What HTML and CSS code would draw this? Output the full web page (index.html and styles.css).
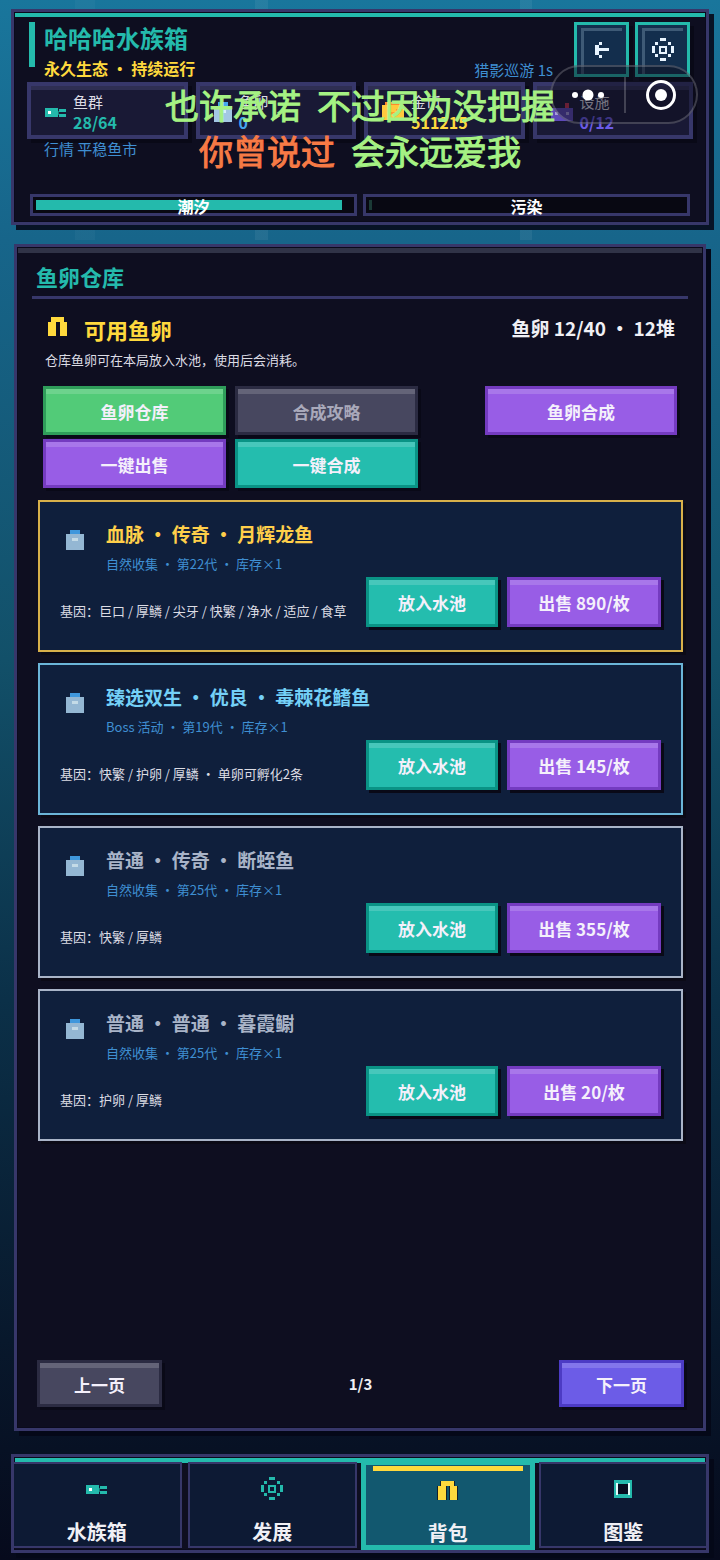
FILE: index.html
```
<!DOCTYPE html>
<html lang="zh-CN">
<head>
  <meta charset="UTF-8" />
  <meta name="viewport" content="width=device-width, initial-scale=1.0" />
  <title>哈哈哈水族箱</title>
  <link rel="stylesheet" href="styles.css">
</head>
<body>
  <!-- shared pixel icons -->
  <svg class="sprites" aria-hidden="true">
    <symbol id="i-fish" viewBox="0 0 21 9">
      <path fill="#24baac" d="M0 0h13v9H0zM14 1h7v3h-7zM14 6h7v3h-7z"/>
      <path fill="#127c76" d="M13 3h1v4h-1z"/>
      <path fill="#fff" d="M3 3h3v3H3z"/>
    </symbol>
    <symbol id="i-gear" viewBox="0 0 24 24">
      <path fill="currentColor" d="M9 0h6v3H9zM9 20h6v3H9zM1 8h3v7H1zM20 8h3v7h-3zM4 4h3v3H4zM17 4h3v3h-3zM4 16h3v3H4zM17 16h3v3h-3z"/>
      <path fill="currentColor" fill-rule="evenodd" d="M8 8h8v8H8zM10 10v4h4v-4z"/>
    </symbol>
    <symbol id="i-bag" viewBox="0 0 19 19">
      <path fill="#ffd93d" d="M3 0h13v5h3v14h-7V5H8v14H0V5h3z"/>
    </symbol>
    <symbol id="i-egg" viewBox="0 0 18 20">
      <path fill="#45a5ee" d="M4 0h10v5H4z"/>
      <path fill="#a3c8e4" d="M0 4h18v16H0z"/>
      <path fill="#45a5ee" d="M4 0h10v4H4z"/>
      <path fill="#d8f0fa" d="M6 8h6v3H6z"/>
    </symbol>
  </svg>

  <header class="top-panel">
    <div class="top-row">
      <div class="title-block">
        <h1>哈哈哈水族箱</h1>
        <p>永久生态 ・ 持续运行</p>
      </div>
      <span class="event">猎影巡游 1s</span>
      <div class="top-actions">
        <button class="icon-btn" type="button" aria-label="返回">
          <svg width="14" height="17" viewBox="0 0 14 17"><path fill="#e8f4ff" d="M0 4h4v3h10v3H4v4H0zM4 1h3v3H4zM4 14h3v3H4z"/></svg>
        </button>
        <button class="icon-btn" type="button" aria-label="设置">
          <svg width="24" height="24"><use href="#i-gear"/></svg>
        </button>
      </div>
    </div>

    <div class="stats">
      <div class="stat">
        <svg width="21" height="9"><use href="#i-fish"/></svg>
        <div><span>鱼群</span><b class="c-teal">28/64</b></div>
      </div>
      <div class="stat">
        <svg width="18" height="20"><use href="#i-egg"/></svg>
        <div><span>鱼卵</span><b class="c-blue">0</b></div>
      </div>
      <div class="stat">
        <svg width="22" height="20" viewBox="0 0 22 20">
          <path fill="#ff8a2b" d="M3 0h16v3H3z"/>
          <path fill="#ffc93d" d="M0 3h22v15H0z"/>
          <path fill="#ff9f2e" d="M5 7h3v3H5zM8 10h6v3H8zM14 7h3v3h-3z"/>
        </svg>
        <div><span>金币</span><b class="c-yellow">511215</b></div>
      </div>
      <div class="stat">
        <svg width="22" height="18" viewBox="0 0 22 18">
          <path fill="#c2314d" d="M14 0h4v5h-4z"/>
          <path fill="#5d49b8" d="M0 5h22v13H0z"/>
          <path fill="#a79be0" d="M4 9h3v3H4zM15 9h3v3h-3z"/>
        </svg>
        <div><span>设施</span><b class="c-violet">0/12</b></div>
      </div>
    </div>

    <p class="market">行情 平稳鱼市</p>

    <div class="meters">
      <div class="meter"><i style="width: 97%"></i><span>潮汐</span></div>
      <div class="meter meter-low"><i style="width: 1%"></i><span>污染</span></div>
    </div>

    <div class="capsule">
      <button type="button" aria-label="更多">
        <svg width="32" height="12" viewBox="0 0 32 12"><g fill="#fff"><circle cx="3" cy="6" r="3"/><circle cx="16" cy="6" r="5.5"/><circle cx="29" cy="6" r="3"/></g></svg>
      </button>
      <button type="button" aria-label="关闭">
        <svg width="32" height="32" viewBox="0 0 32 32"><circle cx="16" cy="16" r="13.5" fill="none" stroke="#fff" stroke-width="3"/><circle cx="16" cy="16" r="6" fill="#fff"/></svg>
      </button>
    </div>

    <div class="lyrics">
      <p><span>也许承诺</span> <span>不过因为没把握</span></p>
      <p><span class="sung">你曾说过</span> <span>会永远爱我</span></p>
    </div>
  </header>

  <main class="store">
    <h2>鱼卵仓库</h2>
    <div class="store-head">
      <svg width="19" height="19"><use href="#i-bag"/></svg>
      <h3>可用鱼卵</h3>
      <span>鱼卵 12/40 ・ 12堆</span>
    </div>
    <p class="hint">仓库鱼卵可在本局放入水池，使用后会消耗。</p>

    <div class="tools">
      <button class="btn green" type="button">鱼卵仓库</button>
      <button class="btn gray dim" type="button">合成攻略</button>
      <button class="btn purple merge" type="button">鱼卵合成</button>
      <button class="btn purple" type="button">一键出售</button>
      <button class="btn teal" type="button">一键合成</button>
    </div>

    <section class="eggs">
      <article class="egg gold">
        <svg width="18" height="20"><use href="#i-egg"/></svg>
        <div class="egg-info">
          <h4>血脉 ・ 传奇 ・ 月辉龙鱼</h4>
          <p>自然收集 ・ 第22代 ・ 库存×1</p>
        </div>
        <div class="egg-foot">
          <p>基因：巨口 / 厚鳞 / 尖牙 / 快繁 / 净水 / 适应 / 食草</p>
          <button class="btn teal put" type="button">放入水池</button>
          <button class="btn purple sell" type="button">出售 890/枚</button>
        </div>
      </article>
      <article class="egg sky">
        <svg width="18" height="20"><use href="#i-egg"/></svg>
        <div class="egg-info">
          <h4>臻选双生 ・ 优良 ・ 毒棘花鳍鱼</h4>
          <p>Boss 活动 ・ 第19代 ・ 库存×1</p>
        </div>
        <div class="egg-foot">
          <p>基因：快繁 / 护卵 / 厚鳞 ・ 单卵可孵化2条</p>
          <button class="btn teal put" type="button">放入水池</button>
          <button class="btn purple sell" type="button">出售 145/枚</button>
        </div>
      </article>
      <article class="egg">
        <svg width="18" height="20"><use href="#i-egg"/></svg>
        <div class="egg-info">
          <h4>普通 ・ 传奇 ・ 断蛭鱼</h4>
          <p>自然收集 ・ 第25代 ・ 库存×1</p>
        </div>
        <div class="egg-foot">
          <p>基因：快繁 / 厚鳞</p>
          <button class="btn teal put" type="button">放入水池</button>
          <button class="btn purple sell" type="button">出售 355/枚</button>
        </div>
      </article>
      <article class="egg">
        <svg width="18" height="20"><use href="#i-egg"/></svg>
        <div class="egg-info">
          <h4>普通 ・ 普通 ・ 暮霞鳚</h4>
          <p>自然收集 ・ 第25代 ・ 库存×1</p>
        </div>
        <div class="egg-foot">
          <p>基因：护卵 / 厚鳞</p>
          <button class="btn teal put" type="button">放入水池</button>
          <button class="btn purple sell" type="button">出售 20/枚</button>
        </div>
      </article>
    </section>

    <div class="pager">
      <button class="btn gray" type="button">上一页</button>
      <span>1/3</span>
      <button class="btn indigo" type="button">下一页</button>
    </div>
  </main>

  <nav class="tabs">
    <button type="button"><svg width="21" height="9"><use href="#i-fish"/></svg><span>水族箱</span></button>
    <button type="button"><svg class="c-teal" width="24" height="24"><use href="#i-gear"/></svg><span>发展</span></button>
    <button type="button" class="active"><svg class="outlined" width="19" height="19"><use href="#i-bag"/></svg><span>背包</span></button>
    <button type="button">
      <svg width="18" height="18" viewBox="0 0 18 18"><path fill="#24baac" d="M0 0h18v18H0z"/><path fill="#e6fffb" d="M2 3h14v12H2z"/><path fill="#24baac" d="M4 2h10v14H4z"/><path fill="#070d20" d="M4 4h10v10H4z"/></svg>
      <span>图鉴</span>
    </button>
  </nav>
</body>
</html>
```
FILE: styles.css
```
* { box-sizing: border-box; }
html { min-height: 100%; }
body {
  margin: 0;
  padding: 9px 11px 7px;
  min-height: 100vh;
  display: flex;
  flex-direction: column;
  font-family: "Noto Sans CJK SC", sans-serif;
  color: #f0f0f5;
  background:
    linear-gradient(90deg, transparent 75px, rgba(255,255,255,0.03) 75px 95px, transparent 95px 255px, rgba(255,255,255,0.06) 255px 268px, transparent 268px 520px, rgba(255,255,255,0.06) 520px 532px, transparent 532px) 0 0 / 100% 240px no-repeat,
    linear-gradient(#19769c, #17658a 240px, #125069 660px, #0b3048 1000px, #08182c 1340px, #060a1c);
}
h1, h2, h3, h4, p { margin: 0; }
button { font-family: inherit; color: inherit; padding: 0; border: 0; background: none; cursor: pointer; }
svg { display: block; flex: none; }
.sprites { position: absolute; width: 0; height: 0; }

.c-teal { color: #24baac; }
.c-blue { color: #45a5ee; }
.c-yellow { color: #ffd93d; }
.c-violet { color: #6c5ce7; }

/* top panel */
.top-panel {
  position: relative;
  height: 216px;
  padding: 10px 16px 0 15px;
  background: #0e0e20;
  border: 3px solid #37376a;
  box-shadow: 5px 5px 0 #071326, inset 0 0 0 1px #0a0a1c, inset 0 5px 0 #24baac;
}
.top-row { display: flex; align-items: flex-start; height: 60px; }
.title-block { flex: 1; padding-left: 9px; border-left: 6px solid #24baac; height: 45px; }
.title-block h1 { font-size: 24px; line-height: 32px; color: #24baac; }
.title-block p { font-size: 16px; line-height: 28px; font-weight: bold; color: #ffd93d; }
.event { margin: 36px 21px 0 0; font-size: 15px; line-height: 24px; color: #3f8fd2; }
.top-actions { display: flex; gap: 6px; }
.icon-btn {
  width: 55px;
  height: 55px;
  display: grid;
  place-items: center;
  color: #e8f4ff;
  background: #132e4d;
  border: 3px solid #24baac;
  box-shadow: inset 4px 3px 0 #132e4d, inset -4px 0 0 #132e4d, inset 7px 6px 0 #3e5a76, 4px 4px 0 #090917;
}
.stats { display: grid; grid-template-columns: repeat(4, 1fr); gap: 8px; margin: 0 -3px 0 -2px; }
.stat {
  display: flex;
  align-items: center;
  gap: 7px;
  height: 57px;
  padding: 3px 0 0 14px;
  background: #191935;
  border: 4px solid #37376a;
  box-shadow: inset 0 4px 0 #2e2e52, 4px 4px 0 #090917;
}
.stat span { display: block; font-size: 15px; line-height: 20px; color: #dcdce4; }
.stat b { display: block; font-size: 16px; line-height: 20px; }
.market { padding-left: 15px; margin-top: -2px; font-size: 15px; line-height: 24px; color: #3f8fd2; }
.meters { display: grid; grid-template-columns: 1fr 1fr; gap: 6px; margin: 33px 0 0 1px; }
.meter { position: relative; height: 22px; padding: 3px; background: #080812; border: 3px solid #37376a; }
.meter i { display: block; height: 10px; background: #24baac; }
.meter-low i { background: #1b3a36; }
.meter span { position: absolute; inset: 0; text-align: center; font-size: 16px; line-height: 18px; font-weight: bold; color: #fff; }

/* host app controls and floating lyrics */
.capsule {
  position: absolute;
  top: 53px;
  right: 8px;
  width: 148px;
  height: 59px;
  display: grid;
  grid-template-columns: 1fr 1fr;
  background: rgba(14,14,30,0.5);
  border: 2px solid rgba(255,255,255,0.2);
  border-radius: 30px;
}
.capsule button { display: grid; place-items: center; }
.capsule button + button { border-left: 2px solid rgba(255,255,255,0.2); height: 36px; align-self: center; }
.lyrics {
  position: absolute;
  top: 70px;
  left: 0;
  right: 0;
  font-size: 34px;
  line-height: 46px;
  color: #a5f283;
  -webkit-text-stroke: 1px currentColor;
  pointer-events: none;
}
.lyrics p { display: flex; justify-content: center; gap: 16px; }
.lyrics .sung { color: #f77a45; }

/* pixel buttons */
.btn {
  height: 50px;
  padding-top: 1px;
  font-size: 17px;
  font-weight: bold;
  color: #f4f0fb;
  border: 3px solid;
  box-shadow: inset 0 5px 0 rgba(255,255,255,0.16), 3px 3px 0 #090917;
}
.green { background: #52cb78; border-color: #2f9d5a; }
.gray { background: #47475f; border-color: #2b2b42; }
.dim { color: #a9a9ba; }
.purple { background: #985de6; border-color: #743bc0; }
.teal { background: #24bdae; border-color: #0a9385; }
.indigo { background: #6c5ce7; border-color: #4c3bc4; }

/* egg store */
.store {
  flex: 1;
  display: flex;
  flex-direction: column;
  margin: 19px 3px 23px;
  padding: 13px 15px 21px;
  background: #0e0e20;
  border: 3px solid #37376a;
  box-shadow: 5px 5px 0 #040818, inset 0 0 0 1px #0a0a1c, inset 0 6px 0 #303347;
}
.store h2 { padding: 0 4px 4px; font-size: 22px; line-height: 32px; color: #24baac; border-bottom: 3px solid #37376a; }
.store-head { display: flex; padding: 13px 13px 0 16px; }
.store-head svg { margin-top: 5px; }
.store-head h3 { flex: 1; padding-left: 17px; font-size: 22px; line-height: 34px; color: #ffd93d; }
.store-head span { font-size: 19px; line-height: 32px; font-weight: bold; }
.hint { padding-left: 13px; font-size: 13px; line-height: 28px; color: #dcdce4; }
.tools { display: grid; grid-template-columns: 183px 183px 1fr; gap: 4px 9px; padding: 12px 11px 0; }
.tools .btn { height: 49px; }
.merge { width: 192px; justify-self: end; }
.eggs { display: grid; gap: 11px; margin: 12px 5px 0 6px; }
.egg {
  display: grid;
  grid-template-columns: 18px 1fr;
  grid-template-rows: 58px 1fr;
  column-gap: 22px;
  height: 152px;
  padding: 17px 20px 0 26px;
  background: #0f1f3c;
  border: 2px solid #a9b4c8;
  box-shadow: 3px 3px 0 #0b0a16;
}
.egg > svg { margin-top: 11px; opacity: 0.9; }
.egg h4 { font-size: 19px; line-height: 30px; color: #a9b4c8; }
.egg-info p { font-size: 13px; line-height: 30px; color: #3f8fd2; }
.gold { border-color: #d8b04a; }
.gold h4 { color: #ffcf4a; }
.sky { border-color: #6bb5d8; }
.sky h4 { color: #74d0f7; }
.egg-foot { grid-column: 1 / -1; display: flex; margin-left: -6px; }
.egg-foot p { flex: 1; font-size: 13px; line-height: 68px; color: #dcdce4; white-space: nowrap; }
.put { width: 132px; margin-right: 9px; }
.sell { width: 154px; }
.pager { display: flex; align-items: center; justify-content: space-between; margin: auto 4px 0 5px; font-size: 15px; font-weight: bold; }
.pager .btn { width: 125px; height: 47px; }

/* bottom tabs */
.tabs {
  display: grid;
  grid-template-columns: repeat(4, 1fr);
  grid-template-rows: 86px;
  gap: 6px;
  height: 99px;
  padding: 7px 0 0;
  background: #0e0e20;
  border: 1px solid #37376a;
  box-shadow: 5px 5px 0 #040818, inset 0 0 0 2px #37376a, inset 0 0 0 3px #0a0a1c, inset 0 8px 0 #24baac;
}
.tabs button {
  position: relative;
  display: grid;
  grid-template-rows: 54px 27px;
  justify-items: center;
  align-items: center;
  background: #0d1a34;
  border: 2px solid #37376a;
  font-size: 20px;
  line-height: 27px;
  font-weight: bold;
}
.tabs button svg { margin-bottom: 4px; }
.tabs .active { margin: -2px; background: #12586f; border: 5px solid #24baac; }
.tabs .active::before { content: ""; position: absolute; top: 1px; left: 7px; right: 7px; height: 5px; background: #ffd93d; }
.outlined { overflow: visible; filter: drop-shadow(1px 0 0 #14202c) drop-shadow(-1px 0 0 #14202c); }
```
